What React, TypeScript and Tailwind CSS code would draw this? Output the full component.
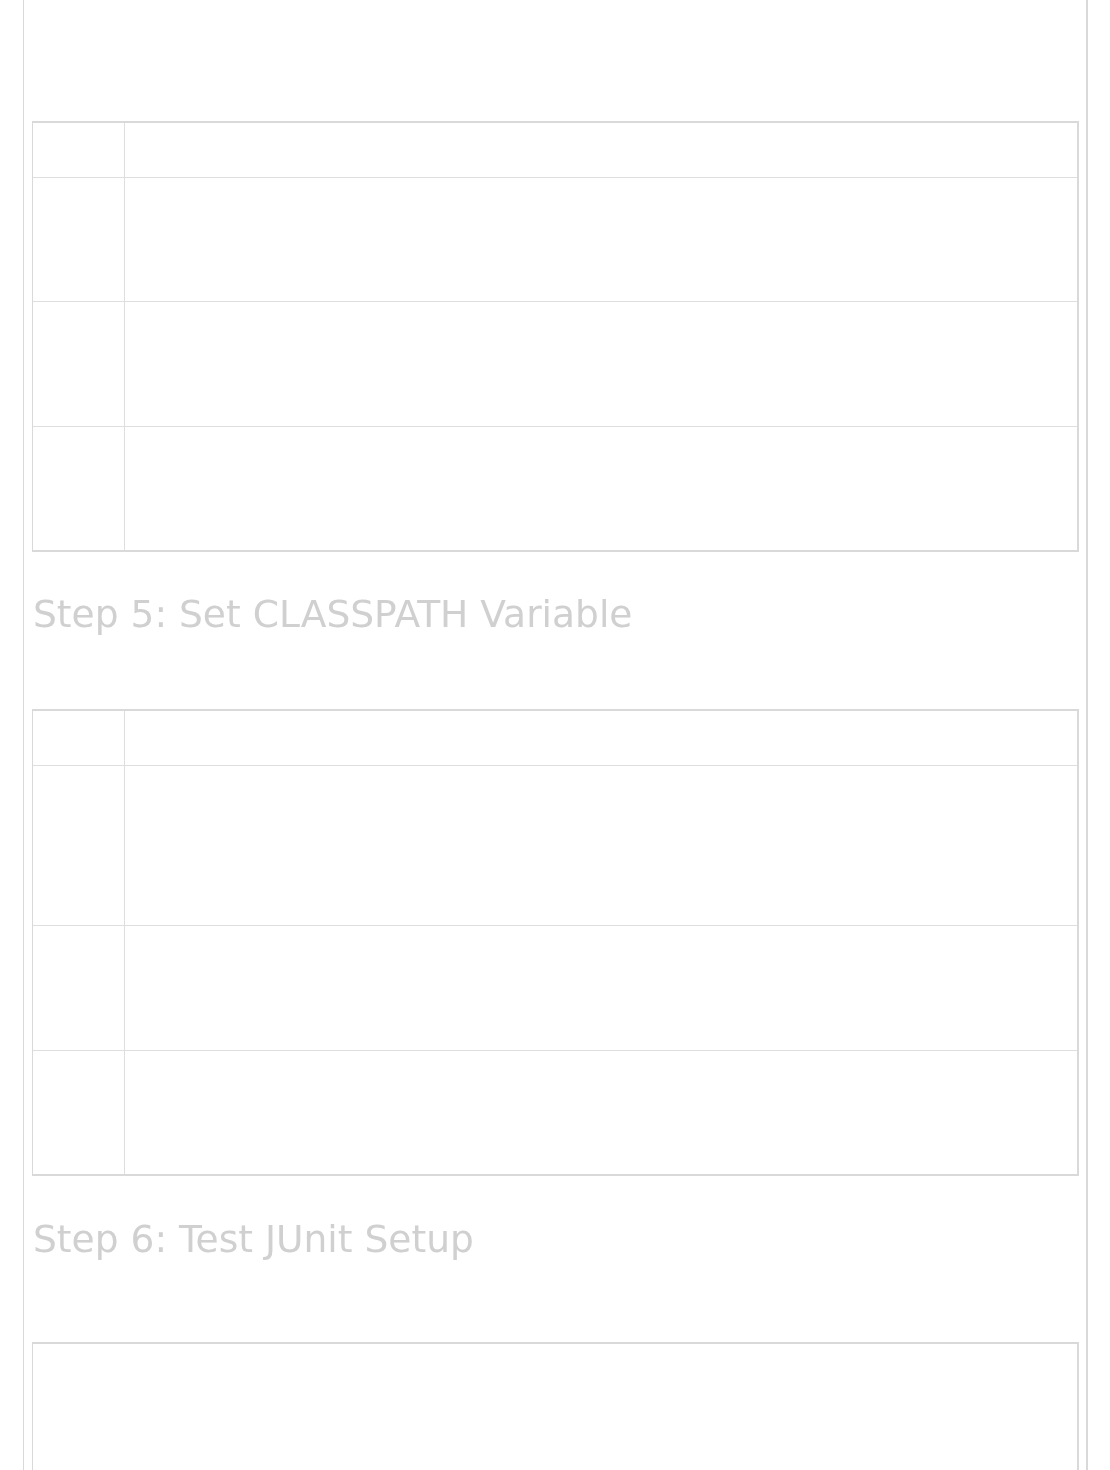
import React from "react";

const B = "border-[#d9d9d9]";

function Row({ h, first }: { h: number; first?: boolean }) {
  return (
    <div
      className={`flex ${first ? "" : "border-t border-[#dedede]"}`}
      style={{ height: h }}
    >
      <div className="w-[92px] shrink-0 border-r border-[#dedede]" />
      <div className="flex-1" />
    </div>
  );
}

function Table({ rows }: { rows: number[] }) {
  return (
    <div className={`border-l border-t-2 border-r-2 border-b-2 ${B} bg-white`}>
      {rows.map((h, i) => (
        <Row key={i} h={h} first={i === 0} />
      ))}
    </div>
  );
}

function Heading({ children }: { children: React.ReactNode }) {
  return (
    <h2
      className="pl-[1px] text-[37.6px] leading-[44px] font-normal text-[#d0d0d0] [filter:blur(0.7px)]"
      style={{ fontFamily: '"DejaVu Sans", Verdana, sans-serif' }}
    >
      {children}
    </h2>
  );
}

export default function App() {
  return (
    <div className="w-[1110px] h-[1470px] overflow-hidden bg-white">
      <div className={`ml-[23px] w-[1065px] h-[1470px] border-l border-r-2 ${B} pl-[8px] pr-[7px] pt-[121px]`}>
        <Table rows={[54, 124, 125, 124]} />
        <div className="mt-[40px] mb-[73px]">
          <Heading>Step 5: Set CLASSPATH Variable</Heading>
        </div>
        <Table rows={[54, 160, 125, 124]} />
        <div className="mt-[41px] mb-[81px]">
          <Heading>Step 6: Test JUnit Setup</Heading>
        </div>
        <div className={`border-l border-t-2 border-r-2 ${B} h-[200px]`} />
      </div>
    </div>
  );
}
